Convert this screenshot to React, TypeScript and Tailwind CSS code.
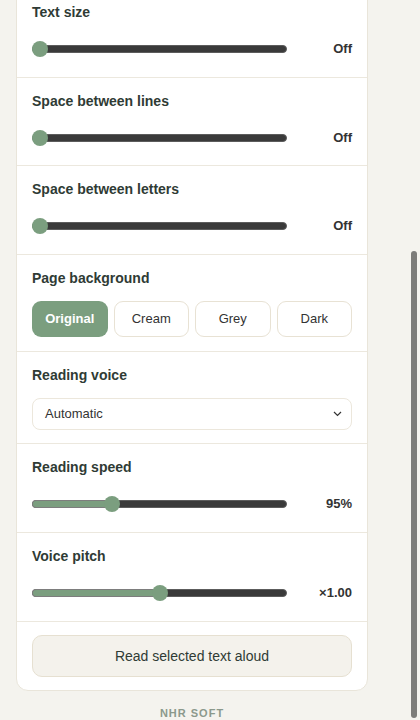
import React from "react";

const font = { fontFamily: '"Liberation Sans", Arial, Helvetica, sans-serif' };

function Slider({ label, pct, value, tight }: { label: string; pct: number; value: string; tight?: boolean }) {
  return (
    <div className={tight ? "px-[15px] pt-[13px] pb-[15px]" : "px-[15px] pt-[13px] pb-[16px]"}>
      <div className="text-[14px] leading-[20px] font-bold text-[#2f3b35]">{label}</div>
      <div className="mt-[15px] h-[24px] flex items-center gap-[9px]">
        <div className="relative flex-1 h-[8px]">
          <div className="absolute inset-0 rounded-full bg-[#3a3a3a] border border-[#5c5c5c]" />
          {pct > 0 && (
            <div
              className="absolute left-0 top-0 bottom-0 rounded-l-full bg-[#7b9e7f] border border-[#7d7d7d] border-r-0"
              style={{ width: `calc(8px + (100% - 16px) * ${pct})` }}
            />
          )}
          <div
            className="absolute top-1/2 -translate-y-1/2 w-[16px] h-[16px] rounded-full bg-[#7b9e7f]"
            style={{ left: `calc((100% - 16px) * ${pct})` }}
          />
        </div>
        <div className="w-[56px] text-right text-[13px] font-bold text-[#333]">{value}</div>
      </div>
    </div>
  );
}

export default function App() {
  return (
    <div style={font} className="relative min-h-screen bg-[#f4f3ee] overflow-hidden">
      <div className="w-[352px] ml-4 -mt-[12px]">
        <div className="bg-white border border-[#e9e5da] rounded-xl divide-y divide-[#ece8de]">
          <Slider label="Text size" pct={0} value="Off" />
          <Slider label="Space between lines" pct={0} value="Off" tight />
          <Slider label="Space between letters" pct={0} value="Off" />
          <div className="px-[15px] pt-[13px] pb-[14px]">
            <div className="text-[14px] leading-[20px] font-bold text-[#2f3b35]">Page background</div>
            <div className="mt-[13px] grid grid-cols-4 gap-[6px]">
              <div className="h-[36px] rounded-[9px] bg-[#7b9e7f] flex items-center justify-center text-white text-[13px] font-bold">
                Original
              </div>
              {["Cream", "Grey", "Dark"].map((t) => (
                <div
                  key={t}
                  className="h-[36px] rounded-[9px] border border-[#e8e2d4] bg-white flex items-center justify-center text-[#333] text-[13px]"
                >
                  {t}
                </div>
              ))}
            </div>
          </div>
          <div className="px-[15px] pt-[13px] pb-[13px]">
            <div className="text-[14px] leading-[20px] font-bold text-[#2f3b35]">Reading voice</div>
            <div className="mt-[13px] h-[32px] rounded-[8px] border border-[#ece7dc] bg-white flex items-center justify-between pl-[12px] pr-[9px]">
              <span className="text-[13px] text-[#333]">Automatic</span>
              <svg width="9" height="6" viewBox="0 0 9 6" fill="none">
                <path d="M1 1l3.5 3.5L8 1" stroke="#333" strokeWidth="1.2" />
              </svg>
            </div>
          </div>
          <Slider label="Reading speed" pct={0.3} value="95%" />
          <Slider label="Voice pitch" pct={0.5} value="×1.00" />
          <div className="px-[15px] pt-[13px] pb-[13px]">
            <div className="h-[42px] rounded-[10px] border border-[#e6e0d1] bg-[#f4f2ec] flex items-center justify-center text-[14px] text-[#2f3b35]">
              Read selected text aloud
            </div>
          </div>
        </div>
        <div className="mt-[14px] text-center text-[11px] leading-[16px] font-bold tracking-[1px] text-[#8b998c]">
          NHR SOFT
        </div>
      </div>
      <div className="absolute right-[3px] top-[251px] w-[6px] h-[467px] rounded-full bg-[#7c7c79]" />
    </div>
  );
}
